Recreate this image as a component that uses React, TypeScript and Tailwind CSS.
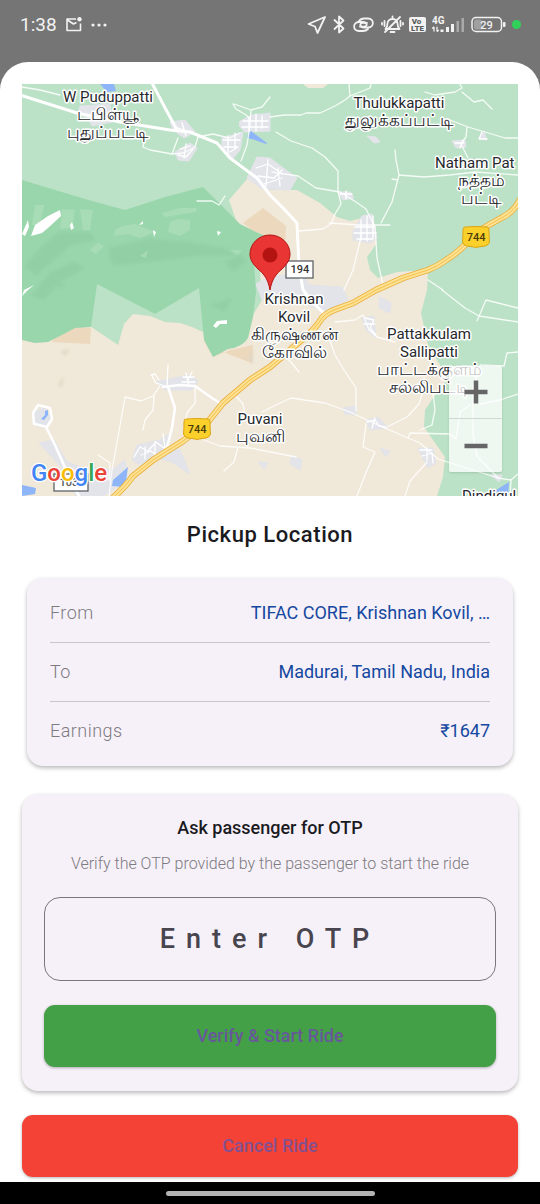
import React from "react";

const ROADS_THIN = [
  "M22 87 L40 90 L60 95",
  "M145 137 L143 147 L150 150 L172 154 L184 153 L195 147 L198 137 L213 134 L229 138 L240 133",
  "M172 154 L178 138",
  "M233 104 L236 109 L246 115 L250 119",
  "M270 97 L262 107 L251 110 L240 106 L234 104 M251 110 L250 125 L247 145 L241 161",
  "M270 117 L284 115 L301 115 L306 113 L320 113 L335 106 L345 100 L350 96 L349 84 M350 96 L370 88 L371 84",
  "M425 92 L435 95 L455 92 L462 88 L460 84 M462 92 L474 102 L483 100 L492 109",
  "M450 120 L468 127 L485 132 L505 138 L518 138 M467 127 L466 137 L461 144 L468 158",
  "M276 132 L291 141 L312 148 L325 157 L338 171 L338 191 L341 204 L335 214 L331 224 L323 229 L299 231",
  "M395 150 L396 160 L399 175 L392 202 L381 223 M399 175 L424 177 L450 175 L475 172 L518 175 M392 179 L398 180",
  "M272 172 L298 176 L316 188 L340 192 L356 202 L366 209 L375 227 L377 258 L383 285",
  "M329 223 L360 225 L390 225 M362 233 L353 270 L344 290",
  "M197 201 L212 201 L219 205 L225 196",
  "M109 496 L112 470 L121 420 L125 397 L141 401 L153 396 L160 386 M154 396 L153 410 L145 420 L143 430",
  "M195 386 L195 403 L187 413 L184 430",
  "M204 440 L220 446 L250 448 L296 457 M238 447 L234 462 L224 471",
  "M270 349 L282 354 L290 361 L299 372 M328 335 L335 355 L344 370 L356 388 L356 411",
  "M262 412 L280 403 L291 398 L325 403 L350 412 L369 421 L385 428 L408 438 L420 443 L438 459 L460 466 L498 478 L511 480",
  "M385 428 L407 417 L419 404 L425 385",
  "M366 424 L363 447 L375 452 L365 475 L357 496",
  "M408 438 L410 433 L450 434 L456 439 L460 412 L470 405",
  "M442 290 L465 308 L479 316 L518 322 M477 321 L486 300 L518 308",
  "M428 280 L443 290",
  "M433 393 L435 410 L432 425 L420 430 M480 366 L473 387 L473 435 L477 456 L498 478",
  "M518 394 L500 400 L480 404 M518 352 L507 353 L504 366 L480 365",
  "M427 462 L420 470 L410 481 L405 496 M511 480 L510 496 M511 480 L518 474",
  "M335 322 L355 320 L363 315 L369 330 L377 337 L395 342",
  "M98 455 L110 463 L109 480",
  "M237 397 L243 404 L246 420",
];

const ROADS_MAIN = [
  "M20 95 L77 113 L120 122 L170 130 L190 132 L217 143 L230 158 L257 178 L270 195 L283 208 L297 223 L299 267 L303 290 L313 303 L327 316",
  "M152 83 L163 104 L177 130",
];

const ROADS_MID = [
  "M34 424 L33 413 L38 405 L50 408 L52 419 L47 427 L35 424",
  "M46 427 L55 445 L63 463 L70 480 L79 496",
  "M163 387 L180 385 L195 386 L212 398 L223 405",
  "M168 387 L175 408 L172 428 L167 447",
];

const TOWNS = [
  "M80 106 L110 104 L112 122 L92 126 L88 118 L78 114Z",
  "M170 122 L185 120 L195 132 L184 138 L173 130Z",
  "M175 152 L190 143 L197 148 L189 161 L178 160Z",
  "M222 138 L243 132 L240 150 L232 160 L222 150Z",
  "M240 121 L252 115 L270 113 L270 131 L245 132 L239 126Z",
  "M247 178 L257 157 L270 158 L297 178 L290 190 L270 189 L262 189Z",
  "M338 192 L350 192 L354 198 L343 200Z",
  "M353 231 L362 216 L372 214 L377 238 L370 243 L353 240Z",
  "M452 141 L465 140 L466 147 L456 148Z M479 138 L484 131 L487 140Z",
  "M367 136 L376 137 L380 142 L374 143Z",
  "M256 284 L270 276 L302 274 L310 285 L342 287 L348 300 L325 312 L295 300 L262 300Z",
  "M156 382 L164 380 L190 375 L198 381 L192 390 L165 390Z",
  "M132 460 L137 445 L160 440 L172 432 L168 446 L180 450 L190 474 L172 462 L150 456 L145 468Z",
  "M33 412 L45 408 L52 418 L44 428 L33 424Z M39 443 L54 440 L67 462 L80 467 L112 470 L125 460 L128 480 L103 496 L76 496 L66 472Z",
  "M362 318 L374 316 L376 338 L366 330Z",
  "M343 408 L356 406 L356 415 L345 414Z M366 420 L378 417 L388 428 L370 430Z",
  "M418 448 L433 448 L436 463 L428 468Z M491 475 L502 475 L499 482Z",
  "M380 297 L391 303 L390 313 L379 308Z M380 448 L390 451 L386 457Z",
  "M292 456 L302 460 L300 470 L290 464Z M258 462 L268 463 L264 469Z",
];

const STREETS = [
  "M175 127 l12 4 M182 123 l4 13 M178 155 l8 2 l7 -8 M180 149 l10 -3 M186 144 l-2 14",
  "M223 140 h17 M224 147 h13 M228 136 v18 M235 133 v16 M230 152 l8 -5",
  "M243 121 h25 M242 127 h26 M249 117 v13 M256 114 v17 M262 116 v12",
  "M256 168 l12 -4 l14 10 M258 176 l16 2 l8 -8 M268 160 l-2 26 M278 168 l2 18 M264 184 l18 -6",
  "M340 194 h12 M346 191 v8",
  "M355 227 h20 M354 233 h22 M357 239 h16 M361 220 v20 M367 216 v25 M373 216 v22",
  "M455 143 h9 M463 140 l-3 8 M482 132 l-3 7 h8",
  "M152 376 l4 7 l9 3 M151 375 l4 -1 l4 6 M168 365 l-1 22 M186 373 l3 13 M192 372 l-4 8 M183 377 h11 M182 382 h13",
  "M134 457 l6 -10 l8 4 l8 -9 l8 6 M141 455 l10 -4 l6 5 l10 -8 M145 447 v12 M155 442 v14 M163 434 l2 14",
  "M365 318 l9 2 l-4 8 l6 7 M364 324 h11",
  "M367 422 l8 -2 l4 6 l6 1 M375 418 l-3 10",
  "M420 450 h12 M422 456 l10 -3 l1 10 M427 448 v12",
];

type Label = { x: number; y: number; latin: string[]; tamil: string[] };

const LABELS: Label[] = [
  { x: 108, y: 102, latin: ["W Puduppatti"], tamil: ["டபிள்யூ", "புதுப்பட்டி"] },
  { x: 399, y: 108, latin: ["Thulukkapatti"], tamil: ["துலுக்கப்பட்டி"] },
  { x: 294, y: 304, latin: ["Krishnan", "Kovil"], tamil: ["கிருஷ்ணன்", "கோவில்"] },
  { x: 429, y: 339, latin: ["Pattakkulam", "Sallipatti"], tamil: ["பாட்டக்குளம்", "சல்லிபட்டி"] },
  { x: 260, y: 424, latin: ["Puvani"], tamil: ["புவனி"] },
  { x: 481, y: 186, latin: [], tamil: ["நத்தம்", "பட்டி"] },
];

function HighwayShield({ x, y }: { x: number; y: number }) {
  return (
    <g transform={`translate(${x} ${y})`}>
      <path
        d="M-11 -10 Q0 -11 11 -10 Q13 -10 13 -7 Q13 0 13.500 5 Q13 8 9 9 L2 10 Q0 11 -2 10 L-9 9 Q-13 8 -13.500 5 Q-13 0 -13 -7 Q-13 -10 -11 -10Z"
        fill="#fbd02b"
        stroke="#dba514"
        strokeWidth="1"
      />
      <text y="4" textAnchor="middle" fontSize="11" fontWeight="500" fill="#4a3c08">
        744
      </text>
    </g>
  );
}

function MapDrawing() {
  return (
    <svg
      viewBox="22 84 496 412"
      className="block w-full font-[Roboto,'Noto_Sans',sans-serif]"
      role="img"
      aria-label="Map of Krishnan Kovil"
    >
      <defs>
        <filter id="soft">
          <feGaussianBlur stdDeviation="1.5" />
        </filter>
      </defs>
      <rect x="22" y="84" width="496" height="412" fill="#bbe2c6" />
      {/* farmland */}
      <path
        d="M22 338 L90 326 L118 345 L124 324 L133 314 L150 316 L165 322 L180 323 L192 327 L203 332 L250 320 L262 300 L258 240 L237 223 L229 200 L248 178 L270 190 L297 190 L320 203 L337 217 L350 221 L362 218 L377 243 L367 257 L370 270 L378 278 L397 272 L428 270 L427 290 L421 313 L428 345 L440 365 L447 380 L433 398 L425 410 L424 427 L433 440 L445 457 L443 477 L437 496 L22 496Z"
        fill="#f0e8d8"
      />
      <path d="M303 84 L328 84 L323 88 L308 88Z" fill="#f0e8d8" />
      <path
        d="M243 223 L263 208 L286 226 L285 250 L268 237 L252 230Z M54 339 L75 327 L91 328 L90 344 L52 342Z M204 341 L213 357 L230 350 L253 345 L252 363 L228 354Z"
        fill="#ecd8bd"
      />
      <path
        d="M22 180 L85 199 L125 210 L165 197 L203 187 L240 224 L256 232 L268 237 L254 262 L256 292 L253 317 L248 338 Q243 347 228 349 L213 357 L204 340 L199 288 L155 314 L97 284 L91 327 L75 328 L60 336 L48 342 L35 343 L22 340Z"
        fill="#9ad6ac"
      />
      {/* hills */}
      <g fill="#84c498" opacity="0.35" filter="url(#soft)">
        <path d="M24 266 L42 246 L58 232 L90 232 L96 240 L70 246 L52 262 L36 276Z" />
        <path d="M30 296 L50 272 L74 262 L86 268 L60 282 L44 300Z M56 284 L66 282 L60 290Z" />
        <path d="M108 248 L150 238 L190 242 L226 248 L236 256 L200 256 L150 262 L112 266Z" />
        <path d="M224 262 L242 254 L246 262 L234 272Z M210 305 L232 298 L225 312Z" />
      </g>
      <g fill="#b3dfbd" opacity="0.6">
        <path d="M35 205 L44 205 L40 225 L32 225Z M62 209 L75 210 L72 228 L60 229Z M80 209 L93 210 L90 230 L83 230Z M115 230 L122 226 L135 224 L155 232 L140 238 L128 234 L114 236Z M170 222 L178 219 L190 220 L190 230 L180 236 L168 232Z M162 213 L180 208 L197 208 L196 212 L165 217Z M90 250 L98 243 L104 246 L96 254Z M230 250 L242 250 L238 255Z M140 256 L148 250 L146 258Z" />
      </g>
      <path
        d="M31 236 L35 225 L48 216 L60 210 L61 216 L48 228 L42 233Z M22 234 L28 220 L29 227 L25 236Z M70 225 L72 222 L74 228 L71 230Z M139 225 L143 221 L143 224Z M153 230 L156 232 L154 237Z M217 231 L221 232 L218 236Z M213 326 L217 321 L227 320 L227 324 L220 324 L216 328Z M22 296 L24 290 L34 285 L28 290Z"
        fill="#fff"
      />
      <path
        d="M60 352 L69 349 L66 356Z M58 385 L64 376 L62 387Z M248 359 L253 348 L253 364Z"
        fill="#e1d8c5"
        filter="url(#soft)"
      />
      {TOWNS.map((d) => (
        <path key={d} d={d} fill="#e3e4ea" stroke="#e3e4ea" strokeWidth="1" strokeLinejoin="round" />
      ))}
      {/* water */}
      <path
        d="M100 84 L114 84 L116 91 L107 92Z M248 134 L251 131 L267 143 L266 144 L255 140 L247 138Z M113 480 L128 467 L125 487 L112 486Z M22 485 L36 488 L35 494 L22 496Z M41 419 L45 415 L45 411 L48 410 L48 415 L44 420Z M496 490 L509 482 L508 496 L497 496Z"
        fill="#8db5f8"
      />
      <g fill="none" strokeLinejoin="round" strokeLinecap="round" stroke="#fff">
        {ROADS_THIN.map((d) => (
          <path key={d} d={d} strokeWidth="1.3" opacity="0.85" />
        ))}
        {STREETS.map((d) => (
          <path key={d} d={d} strokeWidth="1.3" />
        ))}
        {ROADS_MID.map((d) => (
          <path key={d} d={d} strokeWidth="2.6" />
        ))}
        {ROADS_MAIN.map((d) => (
          <path key={d} d={d} strokeWidth="3" />
        ))}
      </g>
      {["#e9ae3c 6.4", "#fde293 4.800", "#f3c04f 1"].map((s) => {
        const [color, width] = s.split(" ");
        return (
          <path
            key={s}
            d="M521 198 Q514 212 503 217 L487 226 Q476 232 467 243 Q456 254 446 260 Q438 266 428 270 L403 278 L376 290 L353 303 L334 310 Q324 314 320 321 Q314 330 305 337 L290 350 L270 367 L250 380 L223 403 L207 423 L183 441 L153 460 L133 476 Q125 487 112 499"
            fill="none"
            stroke={color}
            strokeWidth={width}
            strokeLinejoin="round"
          />
        );
      })}
      <HighwayShield x={476} y={237} />
      <HighwayShield x={197} y={429} />
      <rect x="286" y="261" width="27" height="17" fill="#fff" stroke="#5f6368" strokeWidth="1.3" />
      <text x="300" y="273" textAnchor="middle" fontSize="11" fontWeight="500" fill="#333">
        194
      </text>
      <rect x="54" y="474" width="34" height="17" fill="#fff" stroke="#5f6368" strokeWidth="1.3" />
      <text x="69" y="486" textAnchor="middle" fontSize="11" fontWeight="500" fill="#555">
        103
      </text>
      <g
        fill="#26282c"
        stroke="#fff"
        strokeWidth="3"
        strokeLinejoin="round"
        paintOrder="stroke"
        fontSize="15"
        textAnchor="middle"
      >
        {LABELS.map((label) => (
          <React.Fragment key={label.y}>
            {label.latin.map((line, i) => (
              <text key={line} x={label.x} y={label.y + i * 18}>
                {line}
              </text>
            ))}
            {label.tamil.map((line, i) => (
              <text
                key={line}
                x={label.x}
                y={label.y + (label.latin.length + i) * 18}
                fontSize="17"
                fontWeight="500"
              >
                {line}
              </text>
            ))}
          </React.Fragment>
        ))}
        <text x="435" y="168" textAnchor="start">
          Natham Pat
        </text>
        <text x="462" y="501" textAnchor="start">
          Dindigul
        </text>
      </g>
      {/* marker */}
      <path
        d="M270 290 C268 279 264 274 258 269 C253 264 250 260 250 254 A20 19 0 0 1 290 254 C290 260 287 264 282 269 C276 274 272 279 270 290Z"
        fill="#ea3535"
        stroke="#b31412"
        strokeWidth="1"
      />
      <circle cx="270" cy="255" r="7.500" fill="#b31412" />
      <text
        x="31"
        y="481"
        fontSize="24"
        fontWeight="500"
        stroke="#fff"
        strokeWidth="2.500"
        strokeLinejoin="round"
        paintOrder="stroke"
      >
        <tspan fill="#4285f4">G</tspan>
        <tspan fill="#ea4335">o</tspan>
        <tspan fill="#fbbc05">o</tspan>
        <tspan fill="#4285f4">g</tspan>
        <tspan fill="#34a853">l</tspan>
        <tspan fill="#ea4335">e</tspan>
      </text>
    </svg>
  );
}

function StatusBar() {
  return (
    <header className="flex h-[62px] items-center justify-between pr-[18px] pb-3 pl-5 text-[#f2f2f2]">
      <div className="flex items-center gap-2">
        <span className="text-[19px] leading-6">1:38</span>
        <svg width="44" height="18" viewBox="0 0 44 18" aria-hidden="true">
          <path
            d="M11 3H2V14.500H15.500V7.500M2.500 4L8.500 8L11.500 6.500"
            fill="none"
            stroke="currentColor"
            strokeWidth="1.6"
            strokeLinejoin="round"
          />
          <circle cx="14.500" cy="3.300" r="2.200" fill="currentColor" />
          <g fill="currentColor">
            <circle cx="28" cy="9" r="1.600" />
            <circle cx="34" cy="9" r="1.600" />
            <circle cx="40" cy="9" r="1.600" />
          </g>
        </svg>
      </div>
      <svg width="216" height="22" viewBox="306 14 216 22" aria-hidden="true" className="font-[Roboto,sans-serif]">
        <g fill="none" stroke="#f2f2f2" strokeWidth="1.8" strokeLinejoin="round" strokeLinecap="round">
          <path d="M325 17 L308.500 24 L315 26.500 L317.500 33Z" />
          <path d="M334.500 20 L343.500 28.500 L339 32.500 V16.500 L343.500 20.500 L334.500 29" />
          <path d="M358.500 21.500 C360 19.500 361.500 18.500 364 18.500 H368 C374.500 18.500 374.500 27.500 368 27.500 H364 C359.500 27.500 359 22.800 363 22.800 H367" />
          <path d="M368 29 C366.500 30.500 365 31 363 31 H359 C352.500 31 352.500 22 359 22 H362.500 C367.500 22 368 26.700 364 26.700 H360" />
          <path d="M385.500 29 Q387.500 27 387.500 23.500 C387.500 17.500 397.500 17.500 397.500 23.500 Q397.500 27 399.500 29Z M392.500 16.500 V18 M390.500 32 H394.500 M400 17 L385 32" />
          <path d="M384.500 21 V26 M382 23 V24.500 M400.500 21 V26 M403 23 V24.500" />
          <rect x="472" y="17.500" width="29.500" height="14" rx="4" strokeWidth="1.500" />
        </g>
        <rect x="409" y="17" width="17" height="15" rx="2" fill="#f2f2f2" />
        <g fontWeight="900" fill="#5c5c5c" textAnchor="middle">
          <text x="416.500" y="24" fontSize="8">
            Vo
          </text>
          <text x="417.500" y="31" fontSize="8">
            LTE
          </text>
        </g>
        <text x="432" y="23.500" fontSize="10" fontWeight="700" fill="#f2f2f2">
          4G
        </text>
        <path
          d="M434 31.500 V27 M432.300 28.500 L434 26.700 M437 26.700 V31.500 M438.700 30 L437 31.700"
          stroke="#f2f2f2"
          strokeWidth="1.3"
          fill="none"
        />
        <path d="M440.500 29.500h3v2.500h-3z M446 27h3v5h-3z M451 24h3v8h-3z" fill="#f2f2f2" />
        <path d="M456.500 21h2.500v11h-2.500z M461.500 18h2.500v14h-2.500z" fill="#a9a9a9" />
        <rect x="474" y="19.500" width="8" height="10" rx="2" fill="#a0a0a0" />
        <rect x="503" y="22" width="2.500" height="5" rx="1" fill="#f2f2f2" />
        <text x="486.500" y="28.500" fontSize="11" fontWeight="500" textAnchor="middle" fill="#f2f2f2">
          29
        </text>
        <circle cx="516.500" cy="24.500" r="4.500" fill="#2fd158" />
      </svg>
    </header>
  );
}

const DETAILS = [
  { label: "From", value: "TIFAC CORE, Krishnan Kovil, …" },
  { label: "To", value: "Madurai, Tamil Nadu, India" },
  { label: "Earnings", value: "₹1647" },
];

export default function App() {
  return (
    <div className="flex min-h-screen flex-col bg-[#757575] font-[Roboto,'Noto_Sans',sans-serif]">
      <StatusBar />
      <main className="flex grow flex-col rounded-t-[28px] bg-white px-[22px] pt-[22px] pb-[5px]">
        <div className="relative">
          <MapDrawing />
          <div className="absolute right-4 bottom-6 flex w-[53px] flex-col divide-y divide-[#cfd8d2] rounded-xs bg-white/75 shadow-sm">
            <button type="button" aria-label="Zoom in" className="flex h-[53px] items-center justify-center">
              <svg width="24" height="24" viewBox="0 0 24 24" aria-hidden="true">
                <path d="M0.500 12H23.500M12 0.500V23.500" stroke="#666" strokeWidth="4.500" />
              </svg>
            </button>
            <button type="button" aria-label="Zoom out" className="flex h-[53px] items-center justify-center">
              <svg width="24" height="24" viewBox="0 0 24 24" aria-hidden="true">
                <path d="M0.500 12H23.500" stroke="#666" strokeWidth="4.500" />
              </svg>
            </button>
          </div>
        </div>

        <h1 className="mt-6 mb-7 text-center text-[22px] leading-[30px] font-medium tracking-wide text-[#1b1b1f]">
          Pickup Location
        </h1>

        <dl className="mx-[5px] rounded-2xl bg-[#f6f1f9] p-[23px] text-lg leading-6 shadow-[0_2px_4px_rgba(0,0,0,0.28)]">
          {DETAILS.map((row) => (
            <div
              key={row.label}
              className="flex justify-between gap-4 border-[#c9c4cc] not-first:border-t not-first:pt-[17px] not-last:pb-[17px]"
            >
              <dt className="font-light tracking-wide text-[#7d7a80]">{row.label}</dt>
              <dd className="text-right text-[#1548a0]">{row.value}</dd>
            </div>
          ))}
        </dl>

        <form
          className="mt-7 flex flex-col rounded-2xl bg-[#f6f1f9] px-[22px] pt-[22px] pb-6 shadow-[0_2px_4px_rgba(0,0,0,0.28)]"
          onSubmit={(e) => e.preventDefault()}
        >
          <label htmlFor="otp" className="text-center text-lg leading-6 font-medium text-[#1b1b1f]">
            Ask passenger for OTP
          </label>
          <p className="mt-[14px] text-center text-base leading-5 font-light text-[#7d7a80]">
            Verify the OTP provided by the passenger to start the ride
          </p>
          <input
            id="otp"
            type="text"
            inputMode="numeric"
            placeholder="Enter OTP"
            className="mt-[23px] w-full rounded-2xl border border-[#7a757f] bg-transparent px-4 py-6 text-center text-[27px] leading-[34px] font-medium tracking-[11px] text-[#49454f] outline-none placeholder:text-[#49454f]"
          />
          <button
            type="submit"
            className="mt-6 h-[62px] rounded-[11px] bg-[#43a047] text-lg leading-6 font-medium text-[#67589b] shadow-[0_1px_3px_rgba(0,0,0,0.3)]"
          >
            Verify &amp; Start Ride
          </button>
        </form>

        <button
          type="button"
          className="mt-6 h-[62px] rounded-[11px] bg-[#f44336] text-lg leading-6 font-medium text-[#84508f] shadow-[0_1px_3px_rgba(0,0,0,0.3)]"
        >
          Cancel Ride
        </button>
      </main>
      <footer className="flex h-[22px] items-center justify-center bg-black">
        <div className="h-[5px] w-[209px] rounded-full bg-[#b3b3b3]" />
      </footer>
    </div>
  );
}
